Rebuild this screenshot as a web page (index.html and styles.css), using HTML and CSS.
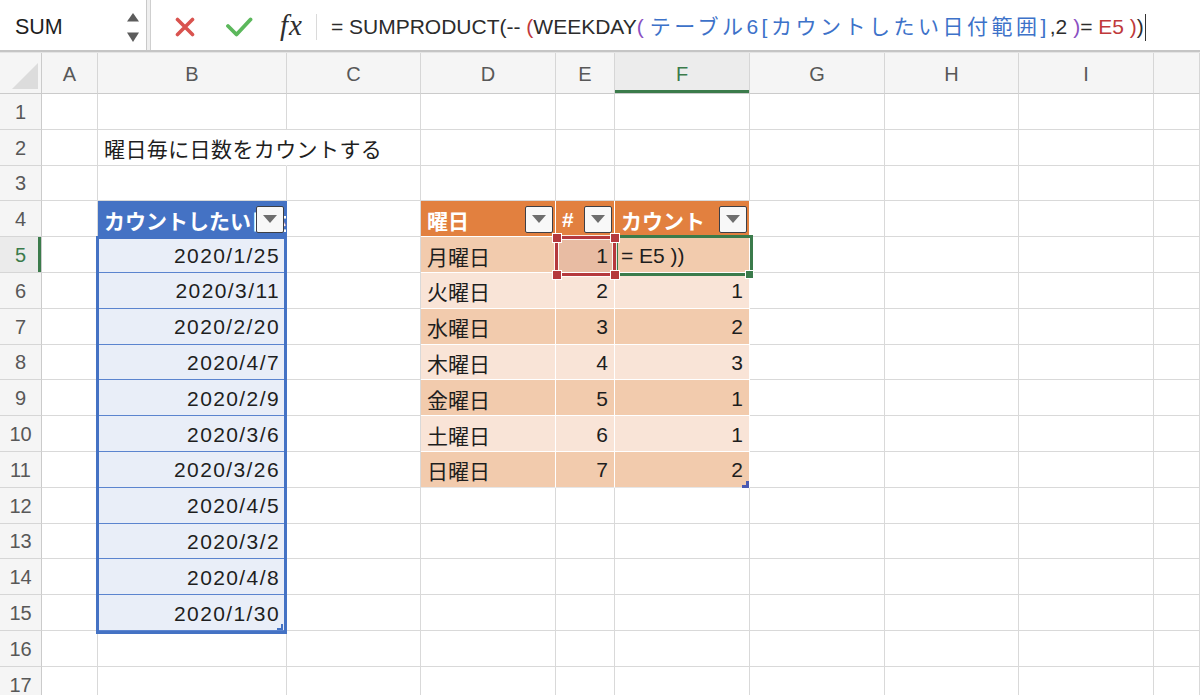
FILE: index.html
```html
<!DOCTYPE html>
<html lang="ja">
<head>
<meta charset="utf-8">
<title>Excel</title>
<link rel="stylesheet" href="styles.css">
</head>
<body>
<div class="app">
  <div class="fbar">
    <div class="namebox">
      <span class="nb-text">SUM</span>
      <svg class="stepper" width="12" height="30" viewBox="0 0 12 30"><path d="M6 0 L12 8.5 L0 8.5 Z" fill="#5c5c5c"/><path d="M0 19.5 L12 19.5 L6 29 Z" fill="#5c5c5c"/></svg>
    </div>
    <div class="nb-sep"></div>
    <div class="fmain">
      <svg class="ico-x" width="20" height="20" viewBox="0 0 20 20"><path d="M2.5 2.5 L17.5 17.5 M17.5 2.5 L2.5 17.5" stroke="#d9534f" stroke-width="3.6" stroke-linecap="round" fill="none"/></svg>
      <svg class="ico-check" width="27" height="20" viewBox="0 0 27 20"><path d="M2 9 L10.5 17.5 L24.5 2.5" stroke="#5cb85c" stroke-width="3.8" stroke-linecap="round" stroke-linejoin="round" fill="none"/></svg>
      <span class="fx">fx</span>
      <span class="vsep"></span>
      <div class="formula"><span>= SUMPRODUCT(-- </span><span class="f-red">(</span><span>WEEKDAY</span><span class="f-pur">(</span><span> </span><span class="f-blue">テーブル6[カウントしたい日付範囲]</span><span>,2 </span><span class="f-pur">)</span><span>= </span><span class="f-red">E5 )</span><span>)</span><span class="caret"></span></div>
    </div>
  </div>
  <div class="fbar-line"></div>

  <div class="sheet">
    <!-- header row -->
    <div class="corner"><svg width="42" height="40" viewBox="0 0 42 40"><path d="M12 36 L38 36 L38 10 Z" fill="#dcdcdc"/></svg></div>
    <div class="ch">A</div><div class="ch">B</div><div class="ch">C</div><div class="ch">D</div><div class="ch">E</div><div class="ch sel">F</div><div class="ch">G</div><div class="ch">H</div><div class="ch">I</div><div class="ch"></div>

    <!-- row 1 -->
    <div class="rh">1</div>
    <div class="c"></div><div class="c"></div><div class="c"></div><div class="c"></div><div class="c"></div><div class="c"></div><div class="c"></div><div class="c"></div><div class="c"></div><div class="c"></div>

    <!-- row 2 -->
    <div class="rh">2</div>
    <div class="c"></div><div class="c ovf">曜日毎に日数をカウントする</div><div class="c"></div><div class="c"></div><div class="c"></div><div class="c"></div><div class="c"></div><div class="c"></div><div class="c"></div><div class="c"></div>

    <!-- row 3 -->
    <div class="rh">3</div>
    <div class="c"></div><div class="c"></div><div class="c"></div><div class="c"></div><div class="c"></div><div class="c"></div><div class="c"></div><div class="c"></div><div class="c"></div><div class="c"></div>

    <!-- row 4 -->
    <div class="rh">4</div>
    <div class="c"></div>
    <div class="c th-blue"><span class="th-text">カウントしたい日付範囲</span><span class="dd"></span></div>
    <div class="c"></div>
    <div class="c th-or"><span class="th-text">曜日</span><span class="dd"></span></div>
    <div class="c th-or"><span class="th-text">#</span><span class="dd"></span></div>
    <div class="c th-or"><span class="th-text">カウント</span><span class="dd"></span></div>
    <div class="c"></div><div class="c"></div><div class="c"></div><div class="c"></div>

    <!-- row 5 -->
    <div class="rh sel">5</div>
    <div class="c"></div>
    <div class="c tb num date">2020/1/25</div>
    <div class="c"></div>
    <div class="c to1">月曜日</div>
    <div class="c to1 num refsel">1</div>
    <div class="c to1 active-cell">= E5 ))</div>
    <div class="c"></div><div class="c"></div><div class="c"></div><div class="c"></div>

    <!-- row 6 -->
    <div class="rh">6</div>
    <div class="c"></div>
    <div class="c tb num date">2020/3/11</div>
    <div class="c"></div>
    <div class="c to2">火曜日</div>
    <div class="c to2 num">2</div>
    <div class="c to2 num">1</div>
    <div class="c"></div><div class="c"></div><div class="c"></div><div class="c"></div>

    <!-- row 7 -->
    <div class="rh">7</div>
    <div class="c"></div>
    <div class="c tb num date">2020/2/20</div>
    <div class="c"></div>
    <div class="c to1">水曜日</div>
    <div class="c to1 num">3</div>
    <div class="c to1 num">2</div>
    <div class="c"></div><div class="c"></div><div class="c"></div><div class="c"></div>

    <!-- row 8 -->
    <div class="rh">8</div>
    <div class="c"></div>
    <div class="c tb num date">2020/4/7</div>
    <div class="c"></div>
    <div class="c to2">木曜日</div>
    <div class="c to2 num">4</div>
    <div class="c to2 num">3</div>
    <div class="c"></div><div class="c"></div><div class="c"></div><div class="c"></div>

    <!-- row 9 -->
    <div class="rh">9</div>
    <div class="c"></div>
    <div class="c tb num date">2020/2/9</div>
    <div class="c"></div>
    <div class="c to1">金曜日</div>
    <div class="c to1 num">5</div>
    <div class="c to1 num">1</div>
    <div class="c"></div><div class="c"></div><div class="c"></div><div class="c"></div>

    <!-- row 10 -->
    <div class="rh">10</div>
    <div class="c"></div>
    <div class="c tb num date">2020/3/6</div>
    <div class="c"></div>
    <div class="c to2">土曜日</div>
    <div class="c to2 num">6</div>
    <div class="c to2 num">1</div>
    <div class="c"></div><div class="c"></div><div class="c"></div><div class="c"></div>

    <!-- row 11 -->
    <div class="rh">11</div>
    <div class="c"></div>
    <div class="c tb num date">2020/3/26</div>
    <div class="c"></div>
    <div class="c to1 last">日曜日</div>
    <div class="c to1 num last">7</div>
    <div class="c to1 num last">2</div>
    <div class="c"></div><div class="c"></div><div class="c"></div><div class="c"></div>

    <!-- row 12 -->
    <div class="rh">12</div>
    <div class="c"></div>
    <div class="c tb num date">2020/4/5</div>
    <div class="c"></div><div class="c"></div><div class="c"></div><div class="c"></div><div class="c"></div><div class="c"></div><div class="c"></div><div class="c"></div>

    <!-- row 13 -->
    <div class="rh">13</div>
    <div class="c"></div>
    <div class="c tb num date">2020/3/2</div>
    <div class="c"></div><div class="c"></div><div class="c"></div><div class="c"></div><div class="c"></div><div class="c"></div><div class="c"></div><div class="c"></div>

    <!-- row 14 -->
    <div class="rh">14</div>
    <div class="c"></div>
    <div class="c tb num date">2020/4/8</div>
    <div class="c"></div><div class="c"></div><div class="c"></div><div class="c"></div><div class="c"></div><div class="c"></div><div class="c"></div><div class="c"></div>

    <!-- row 15 -->
    <div class="rh">15</div>
    <div class="c"></div>
    <div class="c tb num date">2020/1/30</div>
    <div class="c"></div><div class="c"></div><div class="c"></div><div class="c"></div><div class="c"></div><div class="c"></div><div class="c"></div><div class="c"></div>

    <!-- row 16 -->
    <div class="rh">16</div>
    <div class="c"></div><div class="c"></div><div class="c"></div><div class="c"></div><div class="c"></div><div class="c"></div><div class="c"></div><div class="c"></div><div class="c"></div><div class="c"></div>

    <!-- row 17 -->
    <div class="rh">17</div>
    <div class="c"></div><div class="c"></div><div class="c"></div><div class="c"></div><div class="c"></div><div class="c"></div><div class="c"></div><div class="c"></div><div class="c"></div><div class="c"></div>

    <!-- overlays -->
    <div class="rng-blue"><span class="rng-handle"></span></div>
    <div class="act-box"><span class="fill-handle"></span></div>
    <div class="ref-box"><span class="sq tl"></span><span class="sq tr"></span><span class="sq bl"></span><span class="sq br"></span></div>
    <div class="tbl-handle"></div>
  </div>
</div>
</body>
</html>
```

FILE: styles.css
```css
* { box-sizing: border-box; }

body {
  margin: 0;
  background: #fff;
  font-family: "Liberation Sans", "Noto Sans CJK JP", sans-serif;
  color: #222;
}

.app {
  width: 1200px;
  height: 695px;
  overflow: hidden;
  background: #fff;
}

/* ---------- formula bar ---------- */
.fbar {
  height: 50px;
  display: flex;
  background: #fff;
}

.namebox {
  width: 147px;
  display: flex;
  align-items: flex-start;
  padding-left: 15px;
  border-right: 1px solid #c9c9c9;
}

.nb-text {
  font-size: 21.5px;
  line-height: 24px;
  margin-top: 15px;
  color: #1e1e1e;
}

.stepper {
  margin-left: auto;
  margin-right: 7px;
  margin-top: 13px;
}

.nb-sep {
  width: 4px;
  background: #efefef;
  border-right: 1px solid #cfcfcf;
}

.fmain {
  flex: 1;
  display: flex;
  align-items: center;
  padding-top: 4px;
  min-width: 0;
}

.ico-x {
  margin-left: 24px;
}

.ico-check {
  margin-left: 31px;
}

.fx {
  margin-left: 27px;
  font-family: "Liberation Serif", serif;
  font-style: italic;
  font-size: 29px;
  line-height: 30px;
  color: #2e2e2e;
  letter-spacing: 1px;
  margin-top: -4px;
}

.vsep {
  width: 1px;
  height: 26px;
  background: #dadada;
  margin-left: 13px;
}

.formula {
  margin-left: 14px;
  font-size: 21px;
  line-height: 28px;
  color: #2c2c2c;
  white-space: nowrap;
  display: flex;
  align-items: center;
}

.formula span { white-space: pre; }

.f-red { color: #c0393b; }
.f-pur { color: #8a4fc2; }
.f-blue { color: #3d72c9; letter-spacing: 3.5px; }

.caret {
  display: inline-block;
  width: 1.5px;
  height: 27px;
  background: #333;
  margin-left: 1px;
}

.fbar-line {
  height: 3px;
  background: linear-gradient(#c5c5c5 0 2px, #e4e4e4 2px 3px);
}

/* ---------- sheet ---------- */
.sheet {
  position: relative;
  display: grid;
  grid-template-columns: 42px 56px 189px 134px 135px 59px 135px 135px 134px 135px 46px;
  grid-template-rows: 41px repeat(17, 35.8px);
}

.corner {
  background: #f5f5f5;
  border-right: 1px solid #cbcbcb;
  border-bottom: 1px solid #cbcbcb;
}

.corner svg { display: block; }

.ch {
  background: #f5f5f5;
  border-right: 1px solid #d6d6d6;
  border-bottom: 1px solid #cbcbcb;
  display: flex;
  align-items: center;
  justify-content: center;
  font-size: 20px;
  color: #585858;
  padding-top: 2px;
}

.ch.sel {
  background: #ececec;
  color: #3b7b4b;
  box-shadow: inset 0 -3px 0 #3b7b4b;
}

.rh {
  background: #f5f5f5;
  border-right: 1px solid #cbcbcb;
  border-bottom: 1px solid #d6d6d6;
  display: flex;
  align-items: center;
  justify-content: center;
  font-size: 20px;
  color: #585858;
  padding-top: 2px;
}

.rh.sel {
  background: #ebebeb;
  color: #3b7b4b;
  box-shadow: inset -3px 0 0 #3b7b4b;
}

.c {
  border-right: 1px solid #d9d9d9;
  border-bottom: 1px solid #d9d9d9;
  display: flex;
  align-items: center;
  padding: 2px 6px 0 6px;
  font-size: 21px;
  color: #1e1e1e;
  white-space: nowrap;
  min-width: 0;
  position: relative;
}

.c.ovf {
  border-right-color: transparent;
  overflow: visible;
  letter-spacing: 0.4px;
}

.c.num {
  justify-content: flex-end;
  padding-right: 6px;
}

.c.date {
  letter-spacing: 1.4px;
  padding-right: 6px;
}

/* blue table */
.th-blue {
  background: #4472c4;
  color: #fff;
  font-weight: bold;
  overflow: hidden;
  border-right-color: #4472c4;
  border-bottom-color: #fff;
}

.tb {
  background: #e9eef8;
  border-bottom: 1px solid #5b84cf;
}

/* orange table */
.th-or {
  background: #e2803f;
  color: #fff;
  font-weight: bold;
  overflow: hidden;
  border-right-color: #fff;
  border-bottom-color: #fff;
}

.to1 {
  background: #f2cbad;
  border-right-color: #fff;
  border-bottom-color: #fff;
}

.to2 {
  background: #f9e4d7;
  border-right-color: #fff;
  border-bottom-color: #fff;
}

.to1.last { border-bottom-color: #e6e6e6; }

.refsel { background: #e8bca3; }

.th-text {
  white-space: nowrap;
}

.dd {
  position: absolute;
  right: 2px;
  top: 50%;
  margin-top: -13px;
  width: 28px;
  height: 27px;
  background: #f8f8f8;
  border: 1.5px solid #3d3f46;
  border-radius: 2px;
  display: flex;
  align-items: center;
  justify-content: center;
}

.dd::after {
  content: "";
  width: 0;
  height: 0;
  border-left: 7px solid transparent;
  border-right: 7px solid transparent;
  border-top: 8px solid #6e6e6e;
}

/* overlays */
.rng-blue {
  position: absolute;
  left: 96px;
  top: 183px;
  width: 191px;
  height: 398px;
  border: 3px solid #4472c4;
}

.rng-handle {
  position: absolute;
  right: 1px;
  bottom: 1px;
  width: 6px;
  height: 6px;
  border-right: 2px solid #4472c4;
  border-bottom: 2px solid #4472c4;
}

.act-box {
  position: absolute;
  left: 615px;
  top: 182px;
  width: 138px;
  height: 41px;
  border: 3px solid #3b7b4b;
}

.fill-handle {
  position: absolute;
  right: -4px;
  bottom: -6px;
  width: 9px;
  height: 9px;
  background: #3b7b4b;
  border: 1px solid #fff;
}

.ref-box {
  position: absolute;
  left: 555px;
  top: 183px;
  width: 61px;
  height: 40px;
  border: 3px solid #b5393d;
  box-shadow: 0 0 0 1px rgba(255,255,255,0.85), inset 0 0 0 1px rgba(255,255,255,0.85);
}

.sq {
  position: absolute;
  width: 10px;
  height: 10px;
  background: #b5393d;
  border: 1px solid #fff;
}

.sq.tl { left: -6.5px; top: -6.5px; }
.sq.tr { right: -6.5px; top: -6.5px; }
.sq.bl { left: -6.5px; bottom: -6.5px; }
.sq.br { right: -6.5px; bottom: -6.5px; }

.tbl-handle {
  position: absolute;
  left: 742px;
  top: 428px;
  width: 7px;
  height: 7px;
  border-right: 3px solid #4a5ab2;
  border-bottom: 3px solid #4a5ab2;
}
```
